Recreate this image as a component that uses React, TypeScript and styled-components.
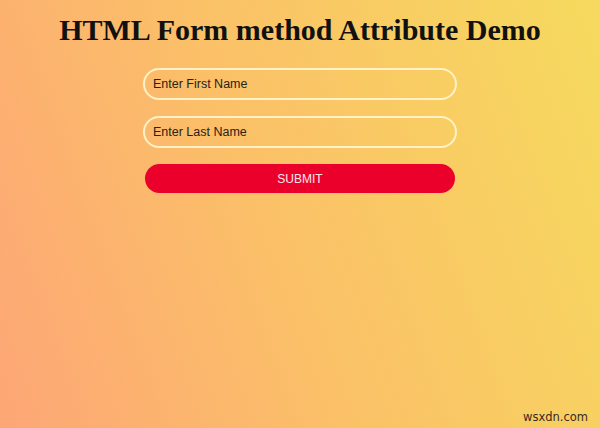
import styled, { createGlobalStyle } from "styled-components";

const GlobalStyle = createGlobalStyle`
  html, body {
    margin: 0;
    padding: 0;
  }
  body {
    min-height: 100vh;
    background: linear-gradient(70deg, #fda676 0%, #fbc068 45%, #f6da5e 100%);
    font-family: "Liberation Serif", serif;
  }
`

const Page = styled.div`
  position: relative;
  min-height: 100vh;
  display: flex;
  flex-direction: column;
  align-items: center;
`

const Title = styled.h1`
  margin: 13px 0 21px;
  font-family: "Liberation Serif", serif;
  font-size: 30px;
  font-weight: 700;
  color: #111;
`

const Form = styled.form`
  width: 314px;
  display: flex;
  flex-direction: column;
  align-items: center;
  gap: 16px;
`

// transparent pill input with a cream border
const TextInput = styled.input`
  box-sizing: border-box;
  width: 100%;
  height: 32px;
  padding: 0 8px;
  border: 2px solid #fff2c8;
  border-radius: 16px;
  background: transparent;
  font-family: "Liberation Sans", Arial, sans-serif;
  font-size: 12.5px;
  outline: none;

  &::placeholder {
    color: #2a2218;
    opacity: 1;
  }
`

const SubmitButton = styled.button`
  box-sizing: border-box;
  width: 310px;
  height: 29px;
  border: none;
  border-radius: 15px;
  background: #ea002b;
  color: #fde8ec;
  font-family: "Liberation Sans", Arial, sans-serif;
  font-size: 12px;
  cursor: pointer;
`

// site watermark sitting over the bottom-right corner
const Watermark = styled.span`
  position: absolute;
  right: 12px;
  bottom: 4px;
  font-family: "DejaVu Sans", sans-serif;
  font-size: 11.5px;
  color: #3a2a1a;
`

const App = () => {
  return (
    <Page>
      <GlobalStyle />
      <Title>HTML Form method Attribute Demo</Title>
      <Form method="post" onSubmit={(e) => e.preventDefault()}>
        <TextInput type="text" placeholder="Enter First Name" />
        <TextInput type="text" placeholder="Enter Last Name" />
        <SubmitButton type="submit">SUBMIT</SubmitButton>
      </Form>
      <Watermark>wsxdn.com</Watermark>
    </Page>
  )
}

export default App;
